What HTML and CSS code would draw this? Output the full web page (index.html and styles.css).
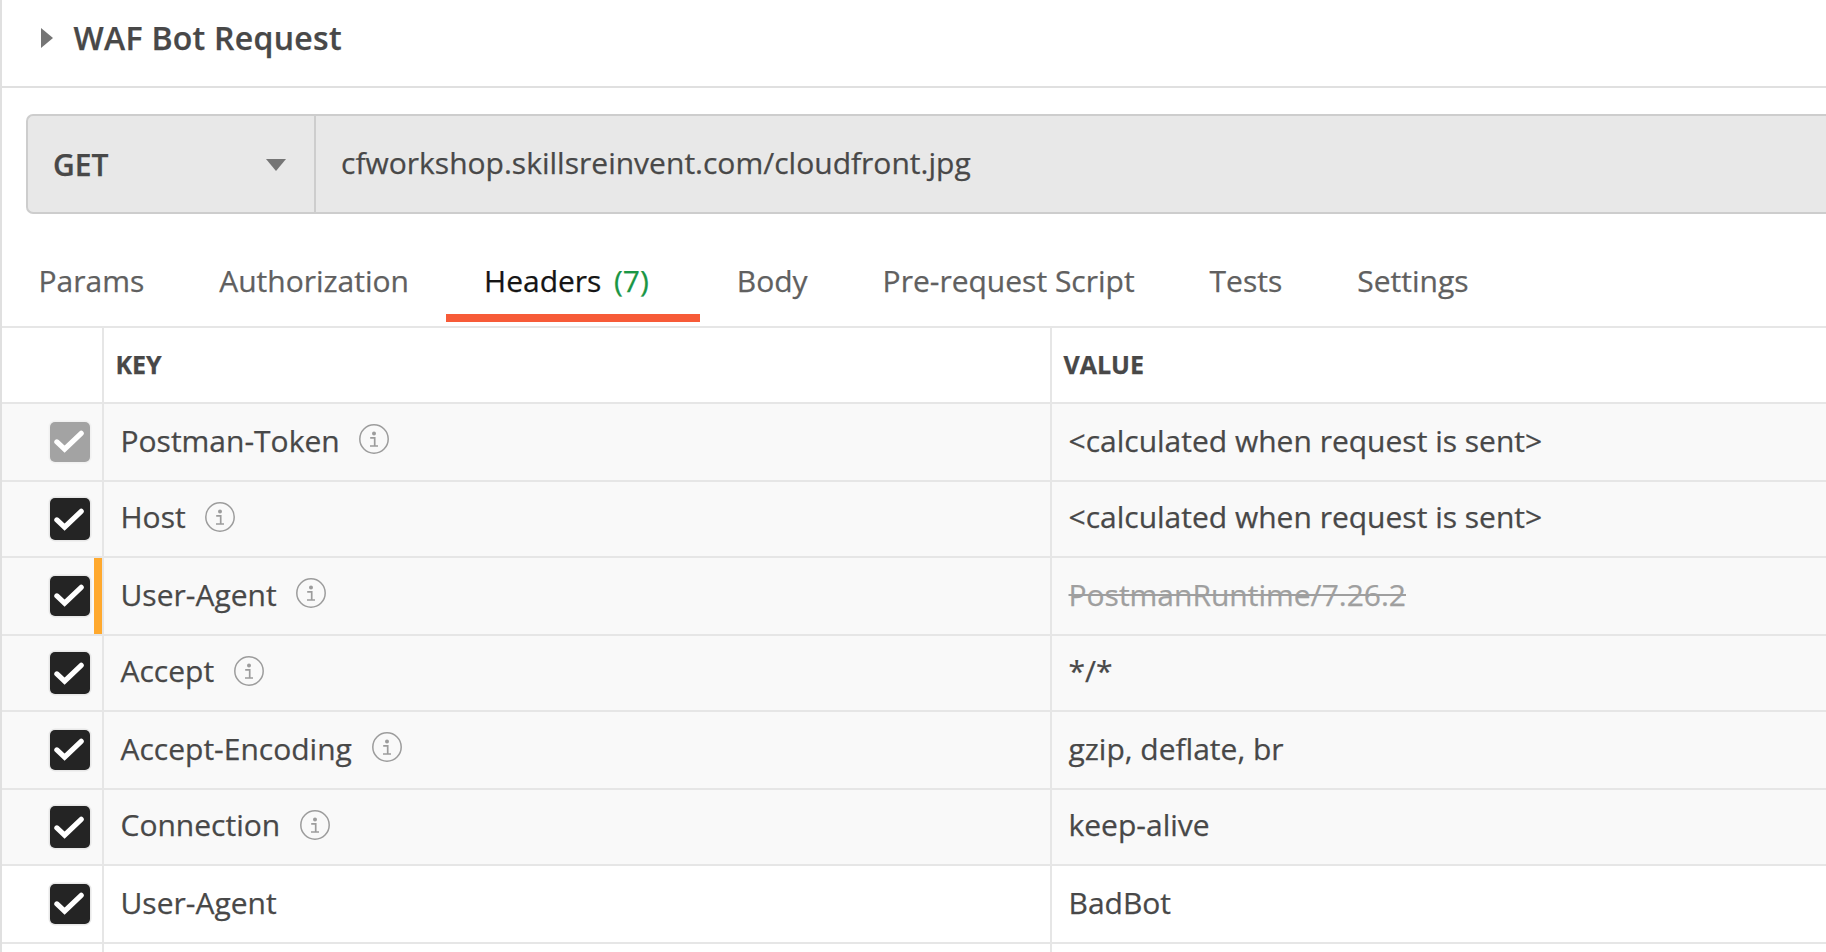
FILE: index.html
```html
<!DOCTYPE html>
<html lang="en">
<head>
<meta charset="utf-8">
<title>WAF Bot Request</title>
<link rel="stylesheet" href="styles.css">
</head>
<body>
<svg class="sprite" aria-hidden="true">
  <symbol id="check" viewBox="0 0 30 24"><path d="M2.9 12.9 L10.6 20.2 L27.2 4.3" fill="none" stroke="#fff" stroke-width="5.2" stroke-linecap="round" stroke-linejoin="miter"/></symbol>
  <symbol id="info" viewBox="0 0 30 30"><circle cx="15" cy="15" r="14.2" fill="none" stroke="#9c9c9c" stroke-width="1.5"/><circle cx="15" cy="9.4" r="2" fill="#9c9c9c"/><path d="M11.2 13.8H15.7V22M11 22H19" fill="none" stroke="#9c9c9c" stroke-width="1.7"/></symbol>
</svg>
<main class="pane">
  <header class="title-bar">
    <svg class="caret" viewBox="0 0 12 20"><path d="M0 0L12 10L0 20Z" fill="#757575"/></svg>
    <h1 class="title">WAF Bot Request</h1>
  </header>
  <section class="url-bar">
    <div class="method"><span>GET</span><svg class="arrow" viewBox="0 0 20 12"><path d="M0 0H20L10 12Z" fill="#757575"/></svg></div>
    <div class="url">cfworkshop.skillsreinvent.com/cloudfront.jpg</div>
  </section>
  <nav class="tabs">
    <span class="tab">Params</span>
    <span class="tab">Authorization</span>
    <span class="tab active">Headers<span class="count">(7)</span></span>
    <span class="tab">Body</span>
    <span class="tab">Pre-request Script</span>
    <span class="tab">Tests</span>
    <span class="tab">Settings</span>
  </nav>
  <section class="table">
    <div class="row head"><div class="cell"></div><div class="cell">KEY</div><div class="cell">VALUE</div></div>
    <div class="row tall auto"><div class="cell pick"><span class="box disabled"><svg class="mark"><use href="#check"/></svg></span></div><div class="cell">Postman-Token<svg class="info"><use href="#info"/></svg></div><div class="cell">&lt;calculated when request is sent&gt;</div></div>
    <div class="row auto"><div class="cell pick"><span class="box"><svg class="mark"><use href="#check"/></svg></span></div><div class="cell">Host<svg class="info"><use href="#info"/></svg></div><div class="cell">&lt;calculated when request is sent&gt;</div></div>
    <div class="row tall auto"><div class="cell pick overridden"><span class="box"><svg class="mark"><use href="#check"/></svg></span></div><div class="cell">User-Agent<svg class="info"><use href="#info"/></svg></div><div class="cell struck"><s>PostmanRuntime/7.26.2</s></div></div>
    <div class="row auto"><div class="cell pick"><span class="box"><svg class="mark"><use href="#check"/></svg></span></div><div class="cell">Accept<svg class="info"><use href="#info"/></svg></div><div class="cell">*/*</div></div>
    <div class="row tall auto"><div class="cell pick"><span class="box"><svg class="mark"><use href="#check"/></svg></span></div><div class="cell">Accept-Encoding<svg class="info"><use href="#info"/></svg></div><div class="cell">gzip, deflate, br</div></div>
    <div class="row auto"><div class="cell pick"><span class="box"><svg class="mark"><use href="#check"/></svg></span></div><div class="cell">Connection<svg class="info"><use href="#info"/></svg></div><div class="cell">keep-alive</div></div>
    <div class="row tall"><div class="cell pick"><span class="box"><svg class="mark"><use href="#check"/></svg></span></div><div class="cell">User-Agent</div><div class="cell">BadBot</div></div>
    <div class="row last"><div class="cell"></div><div class="cell"></div><div class="cell"></div></div>
  </section>
</main>
</body>
</html>
```
FILE: styles.css
```css
* { box-sizing: border-box; }
body {
  margin: 0;
  height: 952px;
  overflow: hidden;
  background: #fff;
  color: #484848;
  font: 30px/41px "Open Sans", "Noto Sans", sans-serif;
  -webkit-text-stroke: 0.25px currentColor;
}
.sprite { display: none; }
.pane { height: 952px; overflow: hidden; border-left: 2px solid #e0e0e0; }

.title-bar {
  display: flex;
  align-items: flex-start;
  height: 88px;
  border-bottom: 2px solid #e0e0e0;
  padding: 16px 0 0 39px;
}
.caret { width: 12px; height: 20px; margin-top: 12px; flex: none; }
.title {
  margin: 0 0 0 20.5px;
  font-size: 32px;
  line-height: 43px;
  font-weight: 600;
  letter-spacing: 0.28px;
}

.url-bar {
  display: flex;
  height: 100px;
  margin: 26px 0 0 24px;
  border: 2px solid #cdcdcd;
  border-right: 0;
  border-radius: 7px 0 0 7px;
  background: #e8e8e8;
}
.method {
  display: flex;
  width: 288px;
  padding: 28px 28px 0 25px;
  justify-content: space-between;
  border-right: 2px solid #cdcdcd;
  font-weight: 600;
}
.arrow { width: 20px; height: 12px; margin-top: 15px; }
.url { padding: 26px 0 0 25px; letter-spacing: 0.01px; }

.tabs {
  display: flex;
  height: 114px;
  padding-top: 46px;
  border-bottom: 2px solid #e6e6e6;
  color: #606060;
}
.tab { height: 62px; padding: 0 37px 0 38px; white-space: nowrap; }
.tab:first-child { padding-left: 36.5px; }
.active {
  margin-right: -1px;
  padding-right: 51px;
  border-bottom: 8px solid #f75b38;
  color: #151515;
}
.count { margin-left: 12.5px; color: #1a9645; }

.row {
  display: grid;
  grid-template-columns: 100px 948px 1fr;
  height: 76px;
  border-bottom: 2px solid #e6e6e6;
}
.tall { height: 78px; }
.auto { background: #f9f9f9; }
.cell {
  display: flex;
  align-items: flex-end;
  padding: 0 0 19px 16.5px;
  border-left: 2px solid #e6e6e6;
  white-space: nowrap;
}
.cell:first-child { border-left: 0; }
.head .cell { padding: 0 0 17px 11.5px; font-size: 25px; font-weight: 700; }
.info { width: 30px; height: 30px; margin: 20px 0 0 19.8px; align-self: flex-start; flex: none; }
.pick { align-items: stretch; padding: 16px 0 16px 48px; }
.tall .pick { padding: 18px 0 18px 48px; }
.box {
  display: flex;
  width: 40px;
  border-radius: 5px;
  background: #242424;
  box-shadow: 0 0 0 1.5px #e8e8e8;
}
.disabled { background: #a3a3a3; box-shadow: 0 0 0 1.5px #f1f1f1; }
.mark { width: 30px; height: 24px; margin: 9px 0 0 4px; }
.tall .mark { margin-top: 7px; }
.overridden { border-right: 8px solid #ffa92e; }
.struck { color: #9f9f9f; }
.struck s { text-decoration-thickness: 2px; }
.last { border-bottom: 0; }
```
